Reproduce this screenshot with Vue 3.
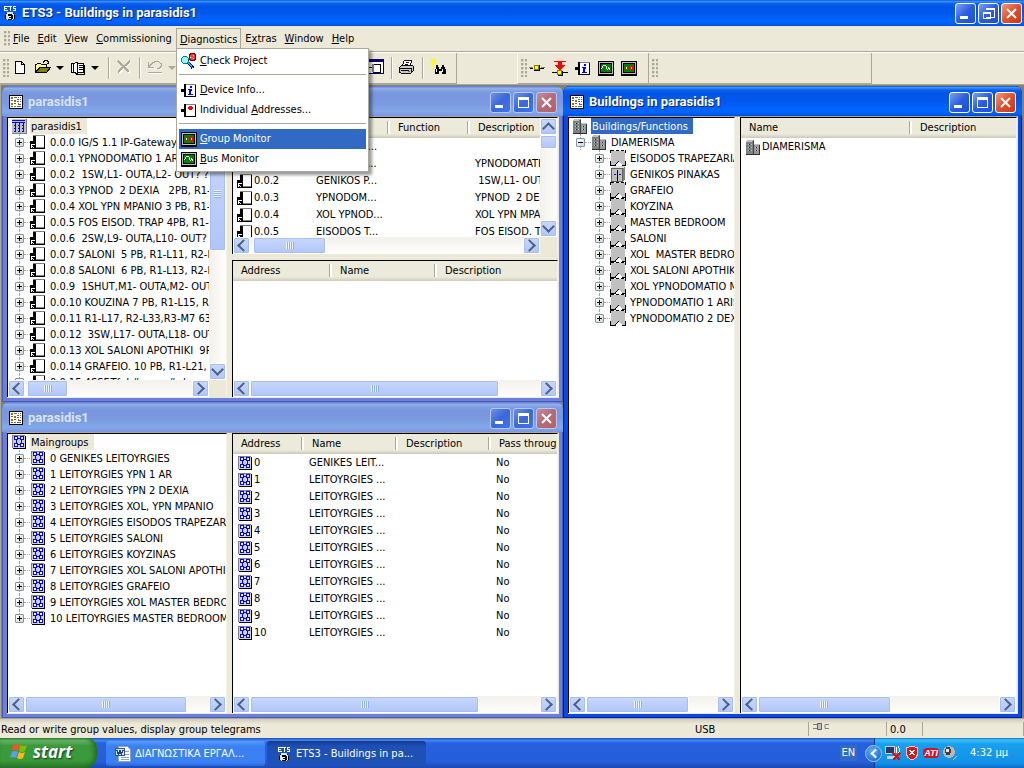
<script setup>
import { ref } from 'vue'

const menus = [
  { key: 'F', rest: 'ile' },
  { key: 'E', rest: 'dit' },
  { key: 'V', rest: 'iew' },
  { key: 'C', rest: 'ommissioning' },
  { key: 'D', rest: 'iagnostics', open: true },
  { pre: 'E', key: 'x', rest: 'tras' },
  { key: 'W', rest: 'indow' },
  { key: 'H', rest: 'elp' }
]

const menuItems = [
  { icon: 'check', key: 'C', rest: 'heck Project' },
  { sep: true },
  { icon: 'info', key: 'D', rest: 'evice Info...' },
  { icon: 'addr', pre: 'Individual ', key: 'A', rest: 'ddresses...' },
  { sep: true },
  { icon: 'group', key: 'G', rest: 'roup Monitor', active: true },
  { icon: 'bus', key: 'B', rest: 'us Monitor' }
]

const onlineTools = [
  { icon: 'line', label: 'Connect' },
  { icon: 'download', label: 'Download' },
  { icon: 'info', label: 'Device info' },
  { icon: 'bus', label: 'Bus monitor' },
  { icon: 'group', label: 'Group monitor' }
]

const node = (text, icon, level = 1, open = false) => ({ text, icon, level, open })

const deviceNodes = [
  '0.0.0 IG/S 1.1 IP-Gateway', '0.0.1 YPNODOMATIO 1 ARIS', '0.0.2  1SW,L1- OUTA,L2- OUT? ?',
  '0.0.3 YPNOD  2 DEXIA   2PB, R1-L5', '0.0.4 XOL YPN MPANIO 3 PB, R1-L7', '0.0.5 FOS EISOD. TRAP 4PB, R1-L9',
  '0.0.6  2SW,L9- OUTA,L10- OUT? ?', '0.0.7 SALONI  5 PB, R1-L11, R2-L12', '0.0.8 SALONI  6 PB, R1-L13, R2-L14',
  '0.0.9  1SHUT,M1- OUTA,M2- OUTB', '0.0.10 KOUZINA 7 PB, R1-L15, R2', '0.0.11 R1-L17, R2-L33,R3-M7 63',
  '0.0.12  3SW,L17- OUTA,L18- OUTB', '0.0.13 XOL SALONI APOTHIKI  9PB', '0.0.14 GRAFEIO. 10 PB, R1-L21, R2',
  '0.0.15 4SSF.Tf- L#...mo.#.d.e'
].map((t) => node(t, 'device'))

const groupNames = [
  '0 GENIKES LEITOYRGIES', '1 LEITOYRGIES YPN 1 AR', '2 LEITOYRGIES YPN 2 DEXIA', '3 LEITOYRGIES XOL, YPN MPANIO',
  '4 LEITOYRGIES EISODOS TRAPEZARIA', '5 LEITOYRGIES SALONI', '6 LEITOYRGIES KOYZINAS',
  '7 LEITOYRGIES XOL SALONI APOTHIKI', '8 LEITOYRGIES GRAFEIO', '9 LEITOYRGIES XOL MASTER BEDROOM',
  '10 LEITOYRGIES MASTER BEDROOM'
]

const roomNames = [
  'EISODOS TRAPEZARIA', 'GENIKOS PINAKAS', 'GRAFEIO', 'KOYZINA', 'MASTER BEDROOM', 'SALONI',
  'XOL  MASTER BEDROOM', 'XOL SALONI APOTHIKI', 'XOL YPNODOMATIO MPANIO', 'YPNODOMATIO 1 ARISTERA', 'YPNODOMATIO 2 DEXIA'
]

const windows = [
  {
    id: 'topology', title: 'parasidis1', active: false,
    columns: [
      { grow: 220, panes: [{
        kind: 'tree', grow: 1, icon: 'topology', root: 'parasidis1', nodes: deviceNodes,
        v: { start: 1, size: 50 }, h: { start: 1, size: 25 }
      }] },
      { grow: 326, panes: [
        {
          kind: 'list', grow: 137, icon: 'device', widths: [78, 79, 80, 160],
          head: ['Address', 'Name', 'Function', 'Description'],
          rows: [
            ['0.0.0', 'GENIKOS P...', '', ''],
            ['0.0.1', 'YPNODOM...', '', 'YPNODOMATIO 1'],
            ['0.0.2', 'GENIKOS P...', '', ' 1SW,L1- OUTA'],
            ['0.0.3', 'YPNODOM...', '', 'YPNOD  2 DEXIA'],
            ['0.0.4', 'XOL YPNOD...', '', 'XOL YPN MPANIO'],
            ['0.0.5', 'EISODOS T...', '', 'FOS EISOD. TRAP']
          ],
          v: { start: 0, size: 17 }, h: { start: 1, size: 27 }
        },
        {
          kind: 'list', grow: 137, icon: '', widths: [99, 105, 200],
          head: ['Address', 'Name', 'Description'], rows: [],
          h: { start: 0, size: 86 }
        }
      ] }
    ]
  },
  {
    id: 'groups', title: 'parasidis1', active: false,
    columns: [
      { grow: 220, panes: [{
        kind: 'tree', grow: 1, icon: 'maingroup', root: 'Maingroups',
        nodes: groupNames.map((t) => node(t, 'maingroup')), h: { start: 0, size: 88 }
      }] },
      { grow: 326, panes: [{
        kind: 'list', grow: 1, icon: 'maingroup', widths: [71, 94, 93, 120],
        head: ['Address', 'Name', 'Description', 'Pass through'],
        rows: Array.from({ length: 11 }, (_, i) => [String(i), i ? 'LEITOYRGIES ...' : 'GENIKES LEIT...', '', 'No']),
        h: { start: 0, size: 79 }
      }] }
    ]
  },
  {
    id: 'buildings', title: 'Buildings in parasidis1', active: true,
    columns: [
      { grow: 167, panes: [{
        kind: 'tree', grow: 1, icon: 'building', root: 'Buildings/Functions', selected: true,
        nodes: [node('DIAMERISMA', 'building', 1, true),
          ...roomNames.map((t, i) => node(t, i === 1 ? 'cabinet' : 'room', 2))],
        h: { start: 0, size: 79 }
      }] },
      { grow: 277, panes: [{
        kind: 'list', grow: 1, icon: 'building', widths: [171, 160], head: ['Name', 'Description'],
        rows: [['DIAMERISMA', '']], h: { start: 0, size: 55 }
      }] }
    ]
  }
]

const status = ref('Read or write group values, display group telegrams')
</script>

<template>
  <div class="desktop">
    <svg class="defs" aria-hidden="true">
      <symbol id="ets" viewBox="0 0 16 16">
        <path fill="#fff" d="M2 1h4v1H3v1h2v1H3v1h3v1H2zM6 1h4v1H9v4H8V2H6zM11 1h3v1h-2v1h2v3h-3V5h2V4h-2z" />
        <circle cx="8" cy="11" r="4.5" fill="#dfe8f5" />
        <path fill="#000" d="M6 9h4v1h1v4h-1v1H6v-1h3v-1H7v-1h2v-1H6zM3 10h1v4H3zM12 10h1v4h-1zM4 8h1v1H4zM11 8h1v1h-1z" />
      </symbol>
      <symbol id="doc" viewBox="0 0 16 16">
        <path fill="#000" d="M1 1h14v14H1z" /><path fill="#fff" d="M2 2h12v12H2z" />
        <path fill="#808000" d="M3 3h2v2H3zM6 6h2v2H6zM3 9h2v2H3zM6 12h2v1H6zM10 3h1v1h-1zM10 9h1v1h-1z" />
        <path stroke="#606060" d="M6 3.5h3M12 3.5h1M9 5.5h2M12 5.5h1M3 6.5h2M9 7.5h2M12 7.5h1M6 9.5h2M10 10.5h3M3 12.5h2M9 12.5h4" />
      </symbol>
      <symbol id="new" viewBox="0 0 16 16">
        <path fill="#fff" stroke="#000" d="M3.5 2.500h6l3 3v9h-9z" /><path fill="none" stroke="#000" d="M9.5 2.500v3h3" />
      </symbol>
      <symbol id="open" viewBox="0 0 16 16">
        <path fill="#ffff80" stroke="#000" d="M.5 13.5v-8h1l1-1h3l1 1h5v3h-7z" />
        <path fill="#808000" stroke="#000" d="M1 13.5l4-5h10.500l-4 5z" />
        <path fill="none" stroke="#000" d="M8.500 3.500v-1h1v-1h3v1h1v2M11.500 4.500h2v-2" />
      </symbol>
      <symbol id="catalog" viewBox="0 0 16 16">
        <path fill="#fff" stroke="#000" d="M1.5 4.500h3l1-1h2v12h-1l-1-2h-4zM7.5 4.500h6v9h-6z" />
        <path stroke="#000" d="M3.5 5v8M9 6.500h4M9 8.500h4M9 10.500h4M14.500 6v9M8 15.500h7" />
      </symbol>
      <symbol id="delete" viewBox="0 0 16 16">
        <path fill="none" stroke="#fff" stroke-width="2" d="M3 3l11 11M14 3L3 14" />
        <path fill="none" stroke="#aca899" stroke-width="2" d="M2 2l11 11M14 2L2 13" />
      </symbol>
      <symbol id="undo" viewBox="0 0 16 16">
        <path fill="none" stroke="#fff" d="M1 14.500h14M2 9.500h6M13.500 10.500h-2" />
        <path fill="none" stroke="#aca899" stroke-width="1" d="M1.500 3v5.500h5M2 7.500l4-4h1l1-1h3l3 2v3l-2 2h-2M1 13.500h14" />
      </symbol>
      <symbol id="panel" viewBox="0 0 16 16">
        <path fill="#fff" stroke="#000080" d="M.5.5h15v14H.5z" /><path fill="#000080" d="M0 0h16v3H0z" />
        <path fill="none" stroke="#000" d="M0 8.5h4M5.5 5v8h7V5z" /><path fill="#808080" d="M4 5h2v8H4z" />
      </symbol>
      <symbol id="print" viewBox="0 0 17 16">
        <path fill="#fff" stroke="#000" d="M5.5 1.5h8l-2 6h-8z" /><path stroke="#000" d="M7 3.5h4M6 5.5h4" />
        <path fill="#c8c8c8" stroke="#000" d="M.5 8.5l2-2h12l1 1v4l-3 3H2.5l-2-1zM1 9.5h12M13.5 9.5v4M2 11.5h9" />
        <path fill="#808000" d="M10 12h2v1h-2z" />
      </symbol>
      <symbol id="find" viewBox="0 0 16 16">
        <path fill="#ff0" d="M1 0h4v1h1v3H5v1H4v2H2V4h1V3h1V2H3v1H1zM2 8h2v2H2z" />
        <path fill="#000" d="M6 6h2v2h1v2h2V8h1V6h2v2h1v2h1v5h-4v-3H9v3H5v-5h1z" />
        <path fill="#fff" d="M6 10h1v3H6zM12 10h1v3h-1z" />
      </symbol>
      <symbol id="line" viewBox="0 0 16 16">
        <path stroke="#808080" d="M0 7.5h4M12 7.5h4" /><path stroke="#000" d="M1 8.5h3M11 8.5h4M5 10.5h6M10.5 5v6" />
        <path fill="#ff0" stroke="#808000" d="M5.5 5.5h4v4h-4z" />
      </symbol>
      <symbol id="download" viewBox="0 0 16 16">
        <path fill="red" d="M2 1h12v1h-4v3h4l-6 5-6-5h4V2H2z" />
        <path stroke="#000" d="M0 12.5h5M11 12.5h5M6 15.5h5M10.5 11v5" /><path fill="#ff0" stroke="#808000" d="M5.5 10.5h4v4h-4z" />
      </symbol>
      <symbol id="info" viewBox="0 0 16 16">
        <path fill="#fff" stroke="#000" d="M3.5 2.5h11v12h-11z" /><path fill="#000" d="M0 7h3v3H0z" />
        <path stroke="#808080" d="M5 2.500h10" /><path stroke="#000" d="M4.500 2v13" />
        <path fill="#00f" d="M9 4h2v2H9zM7 7h4v2h-1v3h2v1H7v-1h1V8H7z" />
      </symbol>
      <symbol id="addr" viewBox="0 0 16 16">
        <path fill="#fff" stroke="#000" d="M3.5 2.5h11v12h-11z" /><path fill="#000" d="M0 7h3v3H0z" />
        <path stroke="#808080" d="M5 2.500h10" /><path stroke="#000" d="M4.500 2v13" /><path fill="red" d="M8 4h3v1h1v2h-1v1H8V7H7V5h1z" />
      </symbol>
      <symbol id="group" viewBox="0 0 16 16">
        <rect width="16" height="15" y="1" rx="1" fill="#000" /><path fill="none" stroke="#c0c0c0" d="M1.5 2.5h13v11h-13z" />
        <path fill="#008000" d="M3 4h10v8H3z" /><path fill="red" d="M4 6h3v4H4zM9 6h3v4H9z" /><path fill="#fff" d="M5 7h1v2H5zM10 7h1v2h-1z" />
      </symbol>
      <symbol id="bus" viewBox="0 0 16 16">
        <rect width="16" height="15" y="1" rx="1" fill="#000" /><path fill="none" stroke="#c0c0c0" d="M1.5 2.5h13v11h-13z" />
        <path fill="#008000" d="M3 4h10v8H3z" /><path fill="#fff" d="M3 8h1v1H3zM4 6h1v2H4zM5 5h3v1H5zM8 6h1v3H8zM9 9h1v1H9zM10 7h1v2h-1zM11 8h1v2h-1z" />
      </symbol>
      <symbol id="check" viewBox="0 0 16 16">
        <path stroke="#000080" stroke-width="3" d="M6 8l6 7" /><path stroke="#00b8ff" stroke-width="1" d="M6 8l6 7" />
        <circle cx="4" cy="7" r="3.5" fill="#80ffff" stroke="#008080" /><path stroke="#000" d="M7 8l3-3" />
        <circle cx="11.500" cy="4" r="3.500" fill="#ff4040" stroke="#800000" /><path stroke="#fff" d="M9 4.500h1M12 2.500h1M12 5.500h1M3 6.500h1M5 8.500h1" />
      </symbol>
      <symbol id="topology" viewBox="0 0 16 16">
        <path fill="#c0c0c0" d="M1 1h14v14H1z" />
        <path fill="none" stroke="#00f" d="M1 2.500h13M1 4.500h13M4.500 4v10M8.500 4v10M12.500 4v10M3 7.500h2M7 7.500h2M11 7.500h2M3 10.500h2M7 10.500h2M11 10.500h2M3 13.500h2M7 13.500h2M11 13.500h2" />
        <path fill="#808080" d="M1 15h15v1H1zM15 1h1v15h-1z" />
      </symbol>
      <symbol id="maingroup" viewBox="0 0 16 16">
        <path fill="#000" d="M2 2h13v13H2z" /><path fill="#808080" d="M1 1h13v13H1z" /><path fill="#d0d0d0" d="M2 2h12v12H2z" />
        <path fill="#fff" stroke="#00f" d="M3.500 2.500h3v3h-3zM9.500 2.500h3v3h-3zM3.500 9.500h3v3h-3zM9.500 9.500h3v3h-3zM6 4.500h4M6 10.500h4M5.500 5v5M10.500 5v5" />
      </symbol>
      <symbol id="device" viewBox="0 0 16 16">
        <path fill="#fff" stroke="#808080" d="M3.500 1.500h11v12h-11z" /><path fill="none" stroke="#000" d="M14.500 2v12.500H5" />
        <path fill="#000" d="M3 2h3v7H3zM0 7h3v2H0z" /><path fill="#fff" stroke="#000" d="M.5 9.500h5v5h-5z" />
        <path fill="#000" d="M2 11h3v3H4v-1H3v1H2v-1h1v-1H2z" />
      </symbol>
      <symbol id="building" viewBox="0 0 16 16">
        <path fill="#808080" d="M2 1h7v14H1V2z" /><path fill="#c0c0c0" d="M2 1h6L7 3H1z" /><path fill="#404040" d="M8 2h1v13H8z" />
        <path fill="#989898" d="M9 6h6v9H9z" /><path fill="#c0c0c0" d="M9 5h6v1H9z" /><path fill="#303030" d="M14 6h1v9h-1zM1 15h14v1H1z" />
        <path fill="#80e0e0" d="M3 5h1v1H3zM6 5h1v1H6zM3 8h1v1H3zM6 8h1v1H6zM3 11h1v1H3zM6 11h1v1H6zM10 8h1v1h-1zM12 8h1v1h-1zM10 11h1v1h-1zM12 11h1v1h-1z" />
        <path fill="#202020" d="M4 5h1v1H4zM4 8h1v1H4zM4 11h1v1H4zM11 8h1v1h-1zM11 11h1v1h-1z" />
      </symbol>
      <symbol id="room" viewBox="0 0 16 16">
        <path fill="#c0c0c0" d="M1 1h14v14H1z" /><path stroke="#000" stroke-dasharray="3 2" d="M1 .5h14" />
        <path fill="none" stroke="#000" d="M.5 0v3M15.500 0v3M.5 11v4.500h5M15.500 11v4.500h-4" />
        <path stroke="#fff" stroke-dasharray="2 1" d="M.5 4v7M15.500 4v7" /><path fill="#fff" d="M5 15l4-4 3 4z" /><path fill="none" stroke="#000" d="M5 15l4-4" />
      </symbol>
      <symbol id="cabinet" viewBox="0 0 16 16">
        <path fill="#e0e0e0" d="M3 0h12l-2 3H1z" /><path fill="#c0c0c0" stroke="#606060" d="M1.500 2.500h11v13h-11z" />
        <path fill="#808080" d="M13 3l2-3v13l-2 3z" /><path stroke="#000" d="M7.500 4v11" /><path fill="#00f" d="M4 8h2v1H4zM9 8h2v1H9z" />
      </symbol>
      <symbol id="plug" viewBox="0 0 16 10">
        <path fill="none" stroke="#808080" d="M0 2.500h4M0 6.500h4M16 2.500h-4v4h4" /><path fill="#c0c0c0" stroke="#606060" d="M4.500 1.500h4v6h-4z" />
      </symbol>
      <symbol id="flag" viewBox="0 0 20 20">
        <path fill="#f35325" d="M4 3q3-2 6 0L9 9Q6 7 3 9z" /><path fill="#81bc06" d="M11 3q3 2 7 0l-2 6q-3 2-6 0z" />
        <path fill="#5a9cf8" d="M3 10q3-2 6 0l-2 6q-3-2-6 0z" /><path fill="#ffba08" d="M10 10q3 2 6 0l-2 6q-3 2-6 0z" />
      </symbol>
      <symbol id="word" viewBox="0 0 16 16">
        <path fill="#fff" stroke="#8ca0c8" d="M3.500.5h9l3 3v12h-12z" /><path stroke="#8ca0c8" d="M10 5.500h4M10 8.500h4M6 11.500h8M6 13.500h8" />
        <path fill="#dce8ff" stroke="#2a5699" d="M.5 2.500h9v7h-9z" /><path fill="none" stroke="#1d3f94" stroke-width="1.500" d="M2 4l1.500 4L5 5l1.500 3L8 4" />
      </symbol>
      <symbol id="net" viewBox="0 0 16 16">
        <path fill="#c8d0e0" d="M0 1h10v8H0zM2 11h8v3H2z" /><path fill="#283868" d="M1 2h8v6H1z" />
        <path fill="none" stroke="#fff" d="M11 2q2 3 0 6M13 1q3 4 0 8" /><path stroke="red" stroke-width="2" d="M8 8l7 7M15 8l-7 7" />
      </symbol>
      <symbol id="shield" viewBox="0 0 14 16">
        <path fill="#d81818" stroke="#f0c0c0" d="M7 1l5.500 2v5q0 5-5.500 7Q1.500 13 1.500 8V3z" /><path stroke="#fff" stroke-width="2" d="M4.500 5l5 5M9.500 5l-5 5" />
      </symbol>
      <symbol id="speaker" viewBox="0 0 16 16">
        <circle cx="7" cy="7" r="6" fill="#b8b8b8" /><ellipse cx="6" cy="6" rx="3" ry="4" fill="#404040" /><path fill="none" stroke="#a8d0ff" d="M13 13l2-2M11 15l4-4" />
        <path fill="#e8e8e8" d="M4 4h3v3H4z" />
      </symbol>
    </svg>

    <header class="titlebar app active">
      <svg class="ico"><use href="#ets" /></svg>
      <h1>ETS3 - Buildings in parasidis1</h1>
      <div class="caps">
        <button class="cap min" aria-label="Minimize"><i></i></button>
        <button class="cap restore" aria-label="Restore"><i></i></button>
        <button class="cap close" aria-label="Close"><svg viewBox="0 0 11 11"><path d="M1 1l9 9M10 1l-9 9" /></svg></button>
      </div>
    </header>

    <nav class="menubar">
      <span class="grip"></span>
      <div v-for="m in menus" :key="m.rest" class="menu">
        <button :class="{ open: m.open }">{{ m.pre }}<u>{{ m.key }}</u>{{ m.rest }}</button>
        <div v-if="m.open" class="popup">
          <template v-for="(it, i) in menuItems" :key="i">
            <hr v-if="it.sep" />
            <button v-else class="item" :class="{ active: it.active }">
              <svg class="ico"><use :href="'#' + it.icon" /></svg><span>{{ it.pre }}<u>{{ it.key }}</u>{{ it.rest }}</span>
            </button>
          </template>
        </div>
      </div>
    </nav>

    <div class="toolrow">
      <div class="toolbar main">
        <span class="grip"></span>
        <button aria-label="New"><svg class="ico"><use href="#new" /></svg></button>
        <button aria-label="Open"><svg class="ico"><use href="#open" /></svg></button>
        <button class="drop" aria-label="Open options"></button>
        <button aria-label="Catalog"><svg class="ico"><use href="#catalog" /></svg></button>
        <button class="drop" aria-label="Catalog options"></button>
        <span class="vsep"></span>
        <button aria-label="Delete" disabled><svg class="ico"><use href="#delete" /></svg></button>
        <span class="vsep"></span>
        <button aria-label="Undo" disabled><svg class="ico"><use href="#undo" /></svg></button>
        <button class="drop" aria-label="Undo options" disabled></button>
        <button class="after" aria-label="Device window"><svg class="ico"><use href="#panel" /></svg></button>
        <span class="vsep"></span>
        <button aria-label="Print"><svg class="ico"><use href="#print" /></svg></button>
        <span class="vsep"></span>
        <button aria-label="Find"><svg class="ico"><use href="#find" /></svg></button>
      </div>
      <div class="toolbar online">
        <span class="grip"></span>
        <button v-for="t in onlineTools" :key="t.icon" :aria-label="t.label"><svg class="ico"><use :href="'#' + t.icon" /></svg></button>
      </div>
      <div class="toolbar extra"><span class="grip"></span></div>
    </div>

    <main class="mdi">
      <section v-for="w in windows" :key="w.id" class="win" :class="[w.id, { active: w.active }]">
        <header class="titlebar" :class="{ active: w.active }">
          <svg class="ico"><use href="#doc" /></svg>
          <h2>{{ w.title }}</h2>
          <div class="caps">
            <button class="cap min" aria-label="Minimize"><i></i></button>
            <button class="cap max" aria-label="Maximize"><i></i></button>
            <button class="cap close" aria-label="Close"><svg viewBox="0 0 11 11"><path d="M1 1l9 9M10 1l-9 9" /></svg></button>
          </div>
        </header>
        <div class="content">
          <div v-for="(c, ci) in w.columns" :key="ci" class="col" :style="{ flexGrow: c.grow }">
            <div v-for="(p, pi) in c.panes" :key="pi" class="pane" :class="{ hasv: p.v }" :style="{ flexGrow: p.grow }">
              <ul v-if="p.kind === 'tree'" class="view tree">
                <li class="root"><svg class="ico"><use :href="'#' + p.icon" /></svg><span class="label" :class="{ selected: p.selected }">{{ p.root }}</span></li>
                <li v-for="n in p.nodes" :key="n.text" :class="'l' + n.level">
                  <button class="exp" :class="{ minus: n.open }" :aria-label="n.open ? 'Collapse' : 'Expand'"></button><span class="dots"></span>
                  <svg class="ico"><use :href="'#' + n.icon" /></svg><span class="label">{{ n.text }}</span>
                </li>
              </ul>
              <div v-else class="view list">
                <table>
                  <colgroup><col v-for="(cw, k) in p.widths" :key="k" :style="{ width: cw + 'px' }" /></colgroup>
                  <thead><tr><th v-for="t in p.head" :key="t">{{ t }}</th></tr></thead>
                  <tbody>
                    <tr v-for="r in p.rows" :key="r[0]">
                      <td v-for="(t, k) in r" :key="k" :class="{ first: k === 0 }"><svg v-if="k === 0" class="ico"><use :href="'#' + p.icon" /></svg>{{ t }}</td>
                    </tr>
                  </tbody>
                </table>
              </div>
              <div v-if="p.v" class="bar vert">
                <button class="arrow up" aria-label="Scroll up"></button>
                <div class="track"><div class="thumb" :style="{ top: p.v.start + '%', height: p.v.size + '%' }"><i v-if="p.v.size > 20"></i></div></div>
                <button class="arrow down" aria-label="Scroll down"></button>
              </div>
              <div class="bar horz">
                <button class="arrow left" aria-label="Scroll left"></button>
                <div class="track"><div class="thumb" :style="{ left: p.h.start + '%', width: p.h.size + '%' }"><i></i></div></div>
                <button class="arrow right" aria-label="Scroll right"></button>
              </div>
            </div>
          </div>
        </div>
      </section>
    </main>

    <footer class="status">
      <span class="grow">{{ status }}</span>
      <span class="usb">USB</span>
      <span class="plug"><svg><use href="#plug" /></svg></span>
      <span class="num">0.0</span>
      <span class="rest"></span>
    </footer>

    <div class="taskbar">
      <button class="start"><svg><use href="#flag" /></svg>start</button>
      <button class="task"><svg class="ico"><use href="#word" /></svg>ΔΙΑΓΝΩΣΤΙΚΑ ΕΡΓΑΛ...</button>
      <button class="task on"><svg class="ico"><use href="#ets" /></svg>ETS3 - Buildings in pa...</button>
      <span class="lang">EN</span>
      <div class="tray">
        <button class="hide" aria-label="Hide icons"></button>
        <svg class="ico"><use href="#net" /></svg>
        <svg class="ico"><use href="#shield" /></svg>
        <span class="ati">ATI</span>
        <svg class="ico"><use href="#speaker" /></svg>
        <time>4:32 μμ</time>
      </div>
    </div>
  </div>
</template>

<style>
body { margin: 0; background: #ece9d8; }
</style>

<style scoped>
* { box-sizing: border-box; }
.desktop { display: flex; flex-direction: column; height: 100vh; overflow: hidden; background: #ece9d8; color: #000; font: 11px/16px "DejaVu Sans Condensed", "Liberation Sans", sans-serif; }
.defs { position: absolute; width: 0; height: 0; }
button { font: inherit; color: inherit; border: 0; padding: 0; margin: 0; background: none; flex: none; }
.ico { width: 16px; height: 16px; flex: none; shape-rendering: crispEdges; display: block; }

.titlebar { display: flex; align-items: center; flex: none; height: 30px; padding: 2px 1px 0 4px; color: #d8e4f8; background: linear-gradient(#5a78d0, #94afe8 8%, #7c9fe2 17%, #7996de 30%, #7b99e1 56%, #82a9e9 85%, #7b96e1); }
.titlebar.active { color: #fff; background: linear-gradient(#0a50d8, #3a93ff 5%, #0a60e8 14%, #0055e5 25%, #0058ee 50%, #0066ff 80%, #0060f8 92%, #0048d0); }
.titlebar.app { height: 26px; padding: 0 2px 0 2px; }
.titlebar h1, .titlebar h2 { margin: 0 0 0 4px; flex: 1; min-width: 0; white-space: nowrap; font: bold 13px/18px Roboto, "Open Sans", sans-serif; }
.active h1, .active h2 { text-shadow: 1px 1px #0a246a; }
.caps { display: flex; gap: 2px; }
.cap { position: relative; display: flex; align-items: center; justify-content: center; width: 21px; height: 21px; border: 1px solid #b8c8f0; border-radius: 3px; background: linear-gradient(135deg, #6a90e8, #3a68d8 50%, #3f74f0); }
.active .cap { border-color: #fff; background: linear-gradient(135deg, #7ba0f0, #2c5ce0 50%, #1a50d8); }
.cap.close { background: linear-gradient(135deg, #c88a98, #b46a78 50%, #b86068); }
.active .cap.close { background: linear-gradient(135deg, #f09878, #e0502c 50%, #c83810); }
.cap svg { width: 11px; height: 11px; }
.cap path { stroke: #fff; stroke-width: 2; fill: none; }
.min i { width: 8px; height: 3px; margin: 9px 4px 0 0; background: #fff; }
.max i { width: 11px; height: 11px; border: 1px solid #fff; border-top-width: 3px; }
.restore i { width: 8px; height: 7px; margin: 4px 4px 0 0; border: 1px solid #fff; border-top-width: 2px; }
.restore::before { content: ""; position: absolute; left: 7px; top: 4px; width: 8px; height: 7px; border: 1px solid #fff; border-top-width: 2px; border-left: 0; }

.grip { flex: none; width: 6px; height: 18px; background: radial-gradient(circle at 1px 1px, #aca899 1px, transparent 2px) 0 0 / 4px 4px; }
.menubar { display: flex; align-items: center; flex: none; height: 26px; padding-left: 4px; border-bottom: 1px solid #aca899; }
.menubar .grip { margin-right: -1px; height: 16px; }
.menu { position: relative; height: 22px; }
.menu > button { height: 22px; padding: 1px 4px 0; white-space: nowrap; border: 1px solid transparent; border-width: 1px 0; }
.menu > button.open { border: 1px solid #aca899; border-bottom: 0; padding: 2px 3px 0; }
u { text-underline-offset: 1px; }
.popup { position: absolute; z-index: 10; left: 0; top: 20px; width: 193px; padding: 2px; background: #fff; border: 1px solid #aca899; box-shadow: 3px 3px 3px rgba(0, 0, 0, .4); }
.item { display: flex; align-items: center; gap: 3px; width: 100%; height: 20px; padding-left: 2px; text-align: left; white-space: nowrap; }
.item span { padding-top: 1px; }
.item.active { background: #316ac5; color: #fff; }
.popup hr { margin: 3px 0 5px; border: 0; height: 1px; background: #aca899; }

.toolrow { display: flex; flex: none; height: 33px; border-top: 1px solid #fff; border-bottom: 1px solid #aca899; }
.toolbar { display: flex; align-items: center; flex: none; height: 31px; padding-left: 3px; border: solid #aca899; border-width: 0 1px 1px 0; }
.toolbar.main { padding-right: 3px; width: 457px; }
.toolbar.online { margin-left: 60px; width: 132px; padding-left: 3px; border-left: 1px solid #fff; }
.toolbar.extra { width: 223px; }
.toolbar button { width: 16px; height: 20px; margin-right: 7px; display: flex; align-items: center; }
.toolbar.main .grip + button { margin-left: 3px; }
.toolbar.online .grip + button { margin-left: 2px; }
.toolbar button.drop { width: 8px; height: 4px; margin: 0 6px 0 -2px; border: solid transparent; border-width: 4px 4px 0; border-top-color: #000; }
.toolbar button.drop:disabled { border-top-color: #aca899; }
.toolbar button.after { margin-left: auto; }
.vsep { width: 2px; height: 22px; margin-right: 6px; border-left: 1px solid #aca899; border-right: 1px solid #fff; }
.drop + .vsep { margin-left: 3px; }
.toolbar.main .ico { margin-top: -2px; }

.mdi { flex: 1; min-height: 0; display: grid; grid-template-columns: 561fr 459fr; grid-template-rows: 316fr 316fr; padding: 1px 2px 0 1px; background: #84806f; border-left: 1px solid #aca899; }
.win { display: flex; flex-direction: column; min-width: 0; min-height: 0; overflow: hidden; padding: 0 4px 4px 5px; background: #6b7fdc; border-radius: 7px 7px 0 0; box-shadow: inset 0 0 0 1px #4a58b8; }
.win .titlebar { margin: 0 -4px 0 -5px; padding: 2px 6px 0 6px; }
.win.active { background: #0a4ae4; box-shadow: inset 0 0 0 1px #001ea0; }
.buildings { grid-column: 2; grid-row: 1 / 3; }
.topology { grid-column: 1; grid-row: 1; }
.groups { grid-column: 1; grid-row: 2; }
.content { flex: 1; min-height: 0; display: flex; gap: 5px; padding: 0 1px 1px 0; background: #ece9d8; border-top: 1px solid #aca899; }
.col { flex: 1 1 0; min-width: 0; display: flex; flex-direction: column; gap: 6px; }
.pane { flex: 1 1 0; min-height: 0; min-width: 0; display: grid; grid-template-columns: minmax(0, 1fr); grid-template-rows: minmax(0, 1fr) 17px; border: solid #000; border-width: 1px 1px 0 1px; border-right-color: #f4f2e8; background: #fff; }
.pane.hasv { grid-template-columns: minmax(0, 1fr) 17px; background: #ece9d8; }
.view { min-width: 0; min-height: 0; overflow: hidden; background: #fff; margin: 0; padding: 0; }
.tree { list-style: none; }
.tree li { position: relative; display: flex; align-items: center; height: 16px; white-space: pre; padding-left: 7px; }
.tree li.root { padding-left: 3px; }
.tree li.l2 { padding-left: 26px; }
.tree li.l1::before, .tree li.l2::before { content: ""; position: absolute; left: 11px; top: 0; height: 16px; border-left: 1px dotted #aca899; }
.tree li.l2::before { left: 30px; }
.tree li:last-child::before { height: 8px; }
.label { flex: none; height: 16px; padding: 1px 5px 0 1px; margin-left: 3px; }
.root .label { background: #ece9d8; }
.root .label.selected { background: #316ac5; color: #fff; }
.exp { position: relative; width: 9px; height: 9px; border: 1px solid #7898b5; border-radius: 1px; background: linear-gradient(#000, #000) center / 5px 1px no-repeat, linear-gradient(#000, #000) center / 1px 5px no-repeat, linear-gradient(135deg, #fff, #d8d4c8); }
.exp.minus { background: linear-gradient(#000, #000) center / 5px 1px no-repeat, linear-gradient(135deg, #fff, #d8d4c8); }
.dots { flex: none; width: 6px; border-top: 1px dotted #aca899; }
.list table { border-collapse: separate; border-spacing: 0; table-layout: fixed; width: 100%; }
.list th { position: relative; height: 20px; padding: 0 0 0 8px; text-align: left; font-weight: normal; white-space: nowrap; background: linear-gradient(#ebeadb 16px, #d6d2c2 19px, #cbc7b8 20px); }
.list th::after { content: ""; position: absolute; right: 0; top: 3px; width: 2px; height: 13px; border-left: 1px solid #aca899; background: #fff; }
.list th:last-child::after { display: none; }
.list td { height: 17px; padding: 1px 0 0 5px; white-space: pre; line-height: 16px; }
.list td.first { display: flex; gap: 1px; padding-left: 4px; }
.bar { display: flex; background: linear-gradient(#f3f1ec, #fefefb); }
.bar.horz { grid-column: 1; }
.bar.vert { flex-direction: column; background: linear-gradient(90deg, #f3f1ec, #fefefb); }
.track { position: relative; flex: 1; }
.arrow, .thumb { border: 1px solid #fff; border-radius: 2px; background: linear-gradient(#c8d8fc, #bacdfb 60%, #b0c6f8); box-shadow: inset 0 0 0 1px #a8bfee; }
.arrow { width: 17px; height: 17px; display: flex; align-items: center; justify-content: center; }
.arrow::before { content: ""; width: 7px; height: 7px; border: solid #4d6185; border-width: 2px 0 0 2px; transform: translateY(2px) rotate(45deg); }
.arrow.left::before { transform: translateX(2px) rotate(-45deg); }
.arrow.right::before { transform: translateX(-2px) rotate(135deg); }
.arrow.down::before { transform: translateY(-2px) rotate(225deg); }
.thumb { position: absolute; display: flex; align-items: center; justify-content: center; }
.horz .thumb { top: 0; bottom: 0; }
.vert .thumb { left: 0; right: 0; }
.thumb i { width: 8px; height: 7px; background: repeating-linear-gradient(90deg, #eef4fe 0 1px, #8cb0f8 1px 2px); }
.vert .thumb i { width: 7px; height: 8px; background: repeating-linear-gradient(#eef4fe 0 1px, #8cb0f8 1px 2px); }

.status { display: flex; align-items: center; flex: none; height: 20px; border-top: 1px solid #aca899; background: linear-gradient(#d0ccbc, #ece9d8 5px); white-space: nowrap; }
.status span { height: 14px; line-height: 16px; }
.status .grow { flex: 1; padding-left: 1px; }
.status .usb { width: 113px; }
.status .plug { width: 78px; padding-left: 4px; border-left: 1px solid #aca899; }
.plug svg { width: 16px; height: 10px; display: block; }
.status .num { width: 36px; padding-left: 3px; border-left: 1px solid #aca899; }
.status .rest { width: 102px; border: solid #aca899; border-width: 0 1px; }

.taskbar { display: flex; align-items: stretch; flex: none; height: 30px; color: #fff; background: linear-gradient(#1c4fc0, #3f86f2 8%, #2660dc 18%, #245edb 80%, #1c48b0); }
.start { display: flex; align-items: center; gap: 4px; width: 97px; padding: 0 0 2px 9px; border-radius: 0 10px 12px 0; font: italic bold 17px/24px "Open Sans", sans-serif; text-shadow: 1px 1px 2px #133a13; background: linear-gradient(#3c8a3c, #6cba6c 8%, #3c993c 25%, #3a9a3a 75%, #2a782a); box-shadow: inset -3px 0 5px #246a24; }
.start svg { width: 20px; height: 20px; }
.task { display: flex; align-items: center; gap: 4px; width: 159px; margin: 3px 0 2px 2px; padding-left: 9px; border-radius: 3px; background: linear-gradient(#5a9afc, #3c81f3 20%, #3a80f4 85%, #2a68d8); white-space: nowrap; }
.start + .task { margin-left: 9px; }
.task.on { background: linear-gradient(#163a88, #1e4fb5 20%, #1e52b7); }
.lang { align-self: center; margin-left: auto; padding: 0 2px; margin-right: 17px; background: #316ac5; }
.tray { position: relative; display: flex; align-items: center; gap: 3px; padding: 0 16px 0 10px; border-left: 1px solid #10408f; background: linear-gradient(#0c6cc8, #3cc0f8 6%, #18a0ee 20%, #1290e8 85%, #0c68c0); }
.hide { position: absolute; left: -10px; top: 7px; width: 17px; height: 17px; border-radius: 50%; border: 1px solid #9ccaf8; background: radial-gradient(circle at 6px 5px, #5ab0f8, #1058d0); }
.hide::before { content: ""; position: absolute; left: 6px; top: 4px; width: 5px; height: 5px; border: solid #fff; border-width: 0 0 2px 2px; transform: rotate(45deg); }
.ati { padding: 0 1px; border-radius: 4px; background: #d81020; font: italic bold 9px/10px "Liberation Sans", sans-serif; }
.tray time { margin-left: 9px; white-space: nowrap; }
</style>
